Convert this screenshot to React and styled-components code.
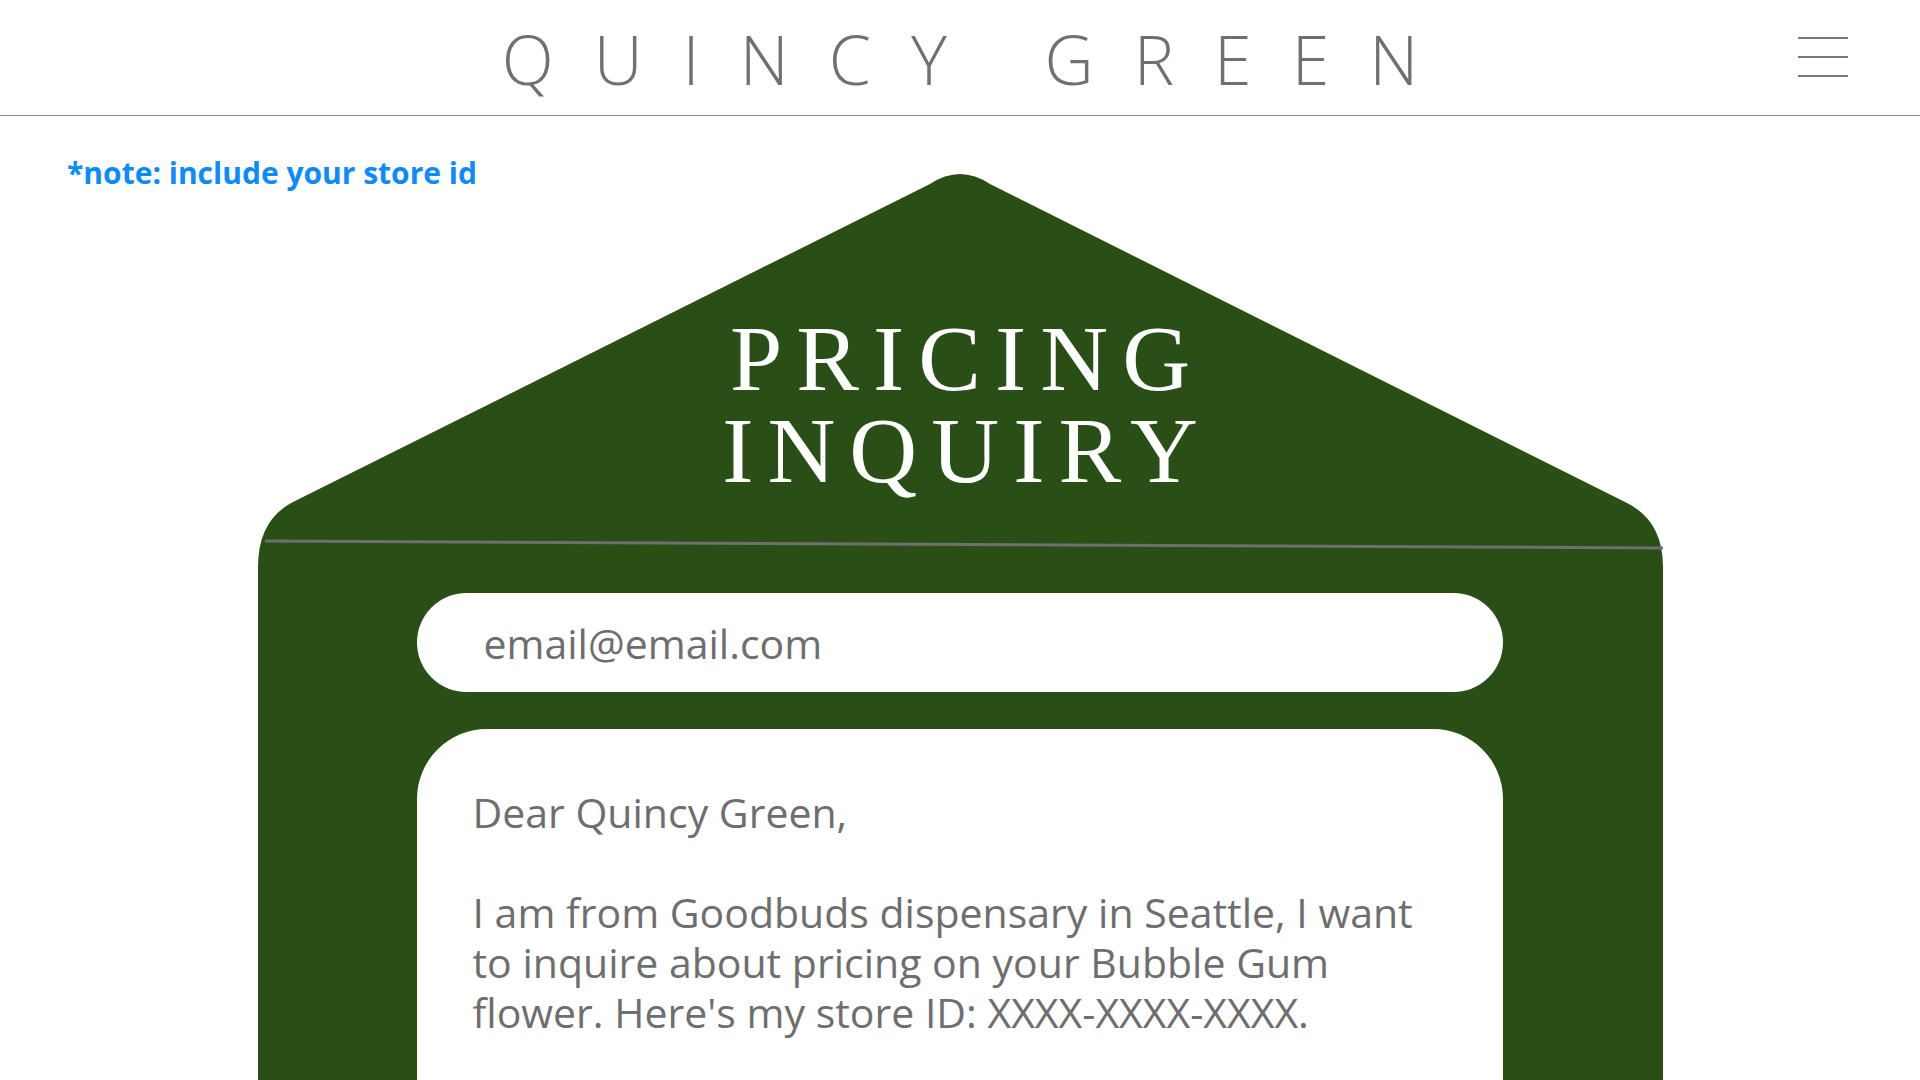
import React from 'react'
import styled, { createGlobalStyle } from 'styled-components';

const GlobalStyle = createGlobalStyle`
    body{
        margin:0;
        background:#ffffff;
        font-family:"Open Sans", "Noto Sans", sans-serif;
        overflow-x:hidden;
    }
`;

const App = () => {
    return (
        <>
            <GlobalStyle />
            <Header>
                <span />
                <Brand>QUINCY GREEN</Brand>
                <Burger aria-label="menu">
                    <BurgerLine />
                    <BurgerLine />
                    <BurgerLine />
                </Burger>
            </Header>
            <Main>
                <Note>*note: include your store id</Note>
                <Envelope>
                    <Flap>
                        <FlapShape viewBox="0 0 1405 400" preserveAspectRatio="none">
                            <path
                                d="M0,400 L0,393 Q0,346 35,328 L672,10 Q702,-10 732,10 L1369,329 Q1405,347 1405,393 L1405,400 Z"
                                fill="#294f17"
                            />
                            <line x1="7" y1="367" x2="1405" y2="374" stroke="#6f6f6f" strokeWidth="3" />
                        </FlapShape>
                        <Title>PRICING<br />INQUIRY</Title>
                    </Flap>
                    <EnvelopeBody>
                        <EmailInput type="email" placeholder="email@email.com" />
                        <Letter>
                            <LetterLine>Dear Quincy Green,</LetterLine>
                            <LetterLine>I am from Goodbuds dispensary in Seattle, I want to inquire about pricing on your Bubble Gum flower. Here's my store ID: XXXX-XXXX-XXXX.</LetterLine>
                        </Letter>
                    </EnvelopeBody>
                </Envelope>
            </Main>
        </>
    )
}

export default App;



// header

const Header = styled.header`
    height:115px;
    border-bottom:1px solid #8c8c8c;
    display:grid;
    grid-template-columns:1fr auto 1fr;
`;

const Brand = styled.h1`
    margin:0;
    padding:2px 0 0 40px;
    font-family:"Open Sans", sans-serif;
    font-weight:300;
    font-size:68px;
    line-height:113px;
    letter-spacing:40px;
    color:#707070;
    white-space:nowrap;
`;

const Burger = styled.div`
    justify-self:end;
    align-self:start;
    margin:37px 72px 0 0;
    width:50px;
    height:40px;
    display:flex;
    flex-direction:column;
    justify-content:space-between;
    cursor:pointer;
`;

const BurgerLine = styled.span`
    display:block;
    height:2px;
    background:#777777;
`;



// page

const Main = styled.main`
    display:grid;
    grid-template-columns:1fr;
`;

const Note = styled.p`
    grid-area:1 / 1;
    justify-self:start;
    align-self:start;
    margin:36px 0 0 67px;
    font-family:"Open Sans", sans-serif;
    font-weight:700;
    font-size:30px;
    color:#0b8bff;
    white-space:nowrap;
    z-index:1;
`;

const Envelope = styled.section`
    grid-area:1 / 1;
    justify-self:center;
    margin-top:58px;
    width:1405px;
`;

const Flap = styled.div`
    position:relative;
    height:400px;
    text-align:center;
`;

const FlapShape = styled.svg`
    position:absolute;
    inset:0;
    width:100%;
    height:100%;
    overflow:visible;
`;

const Title = styled.h2`
    position:relative;
    margin:0;
    padding:138px 0 0 14px;
    font-family:"Liberation Serif", serif;
    font-weight:400;
    font-size:94px;
    line-height:92px;
    letter-spacing:14px;
    color:#ffffff;
`;

const EnvelopeBody = styled.div`
    background:#294f17;
    padding:19px 160px 0 159px;
    display:flex;
    flex-direction:column;
    gap:37px;
`;

const EmailInput = styled.input`
    box-sizing:border-box;
    width:100%;
    height:99px;
    border:none;
    outline:none;
    border-radius:50px;
    padding:0 0 0 67px;
    font-family:"Open Sans", sans-serif;
    font-size:41px;
    color:#6e6e6e;
    background:#ffffff;

    &::placeholder{
        color:#6e6e6e;
    }
`;

const Letter = styled.div`
    background:#ffffff;
    border-radius:70px 70px 0 0;
    min-height:420px;
    padding:58px 70px 40px 56px;
    display:flex;
    flex-direction:column;
    gap:50px;
`;

const LetterLine = styled.p`
    margin:0;
    font-family:"Open Sans", sans-serif;
    font-size:41px;
    line-height:50px;
    color:#6e6e6e;
`;
